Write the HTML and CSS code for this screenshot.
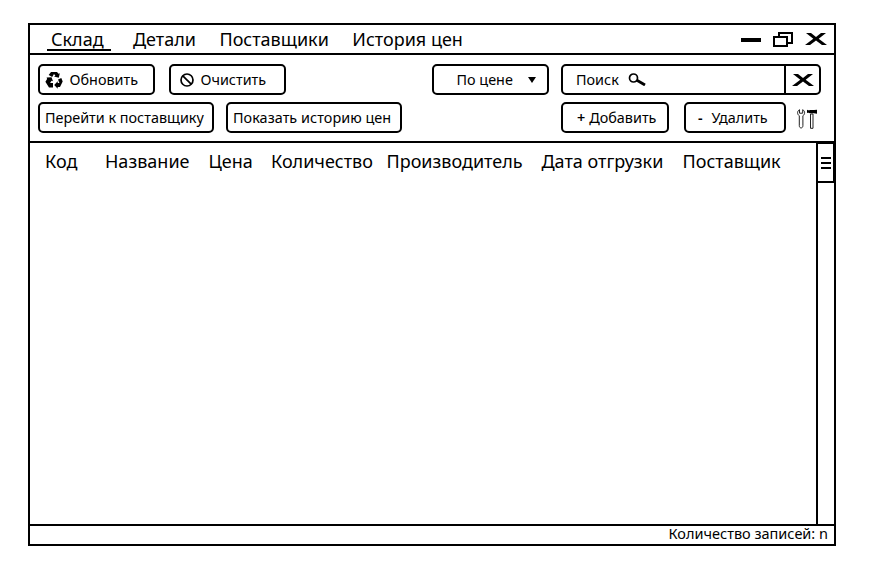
FILE: index.html
```html
<!DOCTYPE html>
<html lang="ru">
<head>
<meta charset="utf-8">
<title>Склад</title>
<link rel="stylesheet" href="styles.css">
</head>
<body>
<div class="window">
  <header class="titlebar">
    <nav class="menu">
      <a class="menu-item active">Склад</a>
      <a class="menu-item">Детали</a>
      <a class="menu-item">Поставщики</a>
      <a class="menu-item">История цен</a>
    </nav>
    <div class="controls">
      <svg class="minimize" viewBox="0 0 20 4" width="20" height="4"><path d="M0 0h20v4H0z"/></svg>
      <svg class="restore" viewBox="0 0 20 15" width="20" height="15" fill="none" stroke="#000" stroke-width="2"><path d="M6 5V1h13v10h-5M1 5h13v9H1z"/></svg>
      <svg class="close" viewBox="0 0 22 14" width="22" height="14"><path d="M1 1h5l5 4.100L16 1h5l-7.300 5.800L22 13h-5l-6-4.400L5 13H0l8.300-6.200z"/></svg>
    </div>
  </header>

  <section class="toolbar">
    <div class="row">
      <button class="btn refresh">
        <svg viewBox="0 0 18 18" width="18" height="18"><path d="M6 1h6l1.500 1.800 1.300-.6-1 4.600-4.800-1.200 1.400-.9-1.400-1.600L7.200 6 3.700 4zM1.600 6.600l4.900-.4 1.500 4-1.500-.5-1.400 2.400H8v4.400H4L.4 10.800l1.700-2.700zM13 8.600l3.300-1.600 1.400 3.500-2.700 5.500h-2.300v1.800L9.200 14l3.500-3.800v1.800h1.700z"/></svg>
        <span>Обновить</span>
      </button>
      <button class="btn clear">
        <svg viewBox="0 0 14 14" width="14" height="14" fill="none" stroke="#000" stroke-width="1.700"><circle cx="7" cy="7" r="6"/><path d="M2.800 2.800l8.400 8.400"/></svg>
        <span>Очистить</span>
      </button>
      <button class="btn sort">
        <span>По цене</span>
        <svg viewBox="0 0 8 6" width="8" height="6"><path d="M0 0h8L4 6z"/></svg>
      </button>
      <div class="search">
        <div class="search-field">
          <span>Поиск</span>
          <svg viewBox="0 0 18 13" width="18" height="13" fill="none" stroke="#000"><circle cx="5.500" cy="5" r="4" stroke-width="1.700"/><path d="M8.500 7L17 12" stroke-width="2.800"/></svg>
        </div>
        <button class="search-clear"><svg viewBox="0 0 22 14" width="22" height="14"><path d="M1 1h5l5 4.100L16 1h5l-7.300 5.800L22 13h-5l-6-4.400L5 13H0l8.300-6.200z"/></svg></button>
      </div>
    </div>
    <div class="row">
      <button class="btn goto">Перейти к поставщику</button>
      <button class="btn history">Показать историю цен</button>
      <button class="btn add"><b>+</b><span>Добавить</span></button>
      <button class="btn remove"><b>-</b><span>Удалить</span></button>
      <svg class="tools" viewBox="0 0 20 20" width="20" height="20">
        <path d="M2.500.7C0 2 0 5.500 2.300 6.700v10c0 3 3.600 3 3.600 0v-10C8.200 5.500 8.200 2 5.700.7v3.500H2.500z" fill="#fff" stroke="#222"/>
        <path d="M13.500 5H16v14.300h-2.500z" fill="#fff" stroke="#222"/>
        <path d="M10 .8c1.500.7 2.400.5 3 .3h4l3-.4v4l-3-.5h-4C12 3.500 11.500 3.500 10 4z"/>
      </svg>
    </div>
  </section>

  <main class="content">
    <div class="table-head">
      <span>Код</span><span>Название</span><span>Цена</span><span>Количество</span><span>Производитель</span><span>Дата отгрузки</span><span>Поставщик</span>
    </div>
    <div class="scrollbar">
      <div class="thumb"><i></i><i></i><i></i></div>
    </div>
  </main>

  <footer class="status">Количество записей: n</footer>
</div>
</body>
</html>
```
FILE: styles.css
```css
* { box-sizing: border-box; }

body {
  margin: 0;
  padding: 23px 0 0 28px;
  background: #fff;
  color: #000;
  font-family: "Noto Sans", sans-serif;
}

.window {
  width: 808px;
  height: 523px;
  border: 2px solid #000;
  display: flex;
  flex-direction: column;
}

svg { display: block; flex: none; }

.titlebar {
  height: 30px;
  flex: none;
  border-bottom: 2px solid #000;
  display: flex;
  justify-content: space-between;
}

.menu {
  display: flex;
  padding-left: 17px;
  font-size: 18px;
  line-height: 28px;
  white-space: nowrap;
}

.menu-item { margin-right: 23.5px; }

.menu-item.active {
  width: 64px;
  height: 26px;
  margin-right: 22px;
  padding-left: 4px;
  border-bottom: 2px solid #000;
}

.controls {
  display: flex;
  align-items: flex-start;
  padding-right: 7px;
}

.minimize { margin-top: 13px; }
.restore { margin: 7px 0 0 12px; }
.close { margin: 7px 0 0 12px; }

.toolbar {
  height: 88px;
  flex: none;
  padding: 9px 13px 0 8px;
  border-bottom: 2px solid #000;
}

.row {
  display: flex;
  height: 31px;
  margin-bottom: 7px;
}

.btn,
.search {
  flex: none;
  height: 31px;
  border: 2px solid #000;
  border-radius: 5px;
  background: #fff;
}

.btn,
.search-clear {
  margin: 0;
  padding: 0;
  display: flex;
  align-items: center;
  color: #000;
  font: 14.4px/27px "Noto Sans", sans-serif;
  white-space: nowrap;
}

.refresh { width: 117px; padding-left: 5px; gap: 6.5px; }
.clear { width: 117px; margin-left: 14px; padding-left: 9px; gap: 6.5px; }
.sort { width: 117px; margin-left: 146px; padding-left: 22.5px; gap: 15px; }

.search {
  width: 260px;
  margin-left: 12px;
  display: flex;
}

.search-field {
  flex: 1;
  display: flex;
  align-items: center;
  gap: 9px;
  padding-left: 13px;
  font-size: 14.4px;
  line-height: 27px;
}

.search-clear {
  width: 35px;
  height: 27px;
  border: 0;
  border-left: 2px solid #000;
  background: none;
  padding-left: 6px;
}

.goto { width: 176px; padding-left: 5px; }
.history { width: 176px; margin-left: 12px; padding-left: 5px; letter-spacing: 0.05px; }
.add { width: 108px; margin-left: 159px; padding-left: 14px; gap: 4px; }
.remove { width: 102px; margin-left: 15px; padding-left: 12px; gap: 9px; }
.btn b { font-weight: 600; }
.tools { margin: 7px 0 0 11px; }

.content {
  flex: 1;
  display: flex;
}

.table-head {
  flex: 1;
  display: grid;
  grid-template-columns: 60px 103.5px 62.5px 115.500px 155px 141px 1fr;
  padding-left: 15px;
  font-size: 18px;
  line-height: 36px;
  white-space: nowrap;
}

.scrollbar {
  width: 18px;
  border-left: 2px solid #000;
}

.thumb {
  height: 40px;
  border: solid #000;
  border-width: 1px 1px 2px 0;
  display: flex;
  flex-direction: column;
  align-items: center;
  justify-content: center;
  gap: 3px;
}

.thumb i {
  width: 10px;
  height: 2px;
  background: #000;
}

.status {
  height: 20px;
  flex: none;
  border-top: 2px solid #000;
  padding-right: 6px;
  text-align: right;
  font-size: 14.5px;
  line-height: 15px;
}
```
